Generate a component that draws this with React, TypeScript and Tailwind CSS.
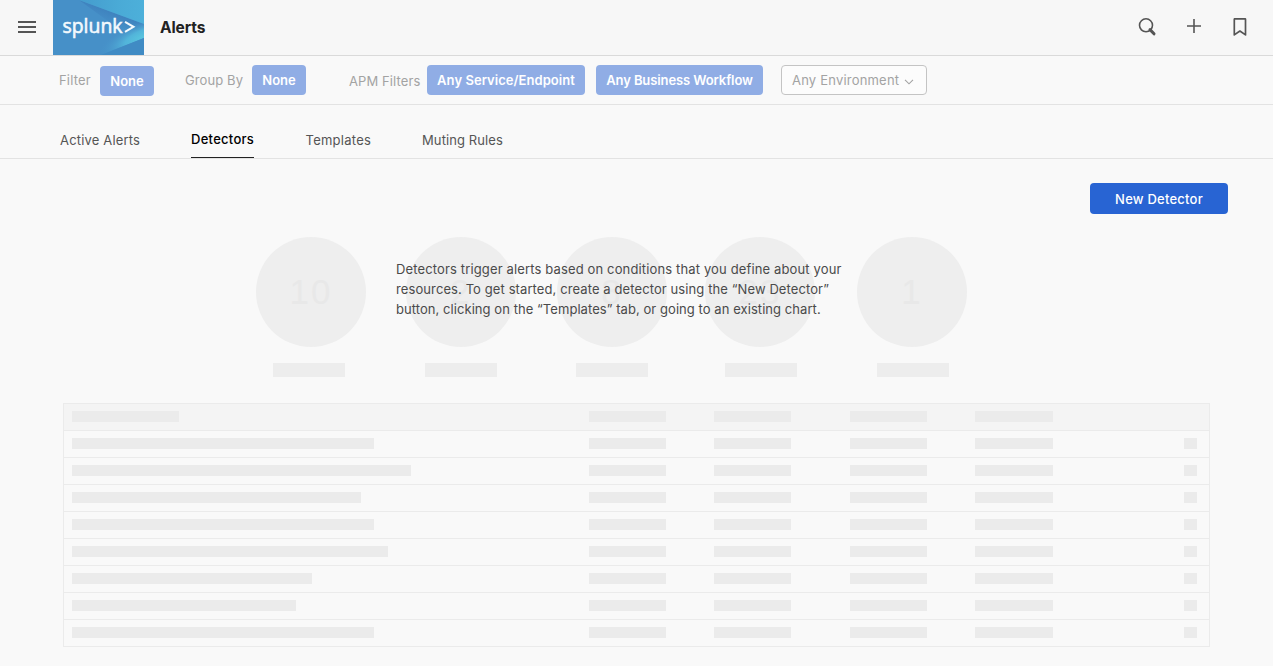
import React from "react";

const pill =
  "flex h-[30px] shrink-0 items-center justify-center rounded-[4px] bg-[#90ade5] text-[13px] font-semibold text-white whitespace-nowrap";

const circles = [
  { value: "10", place: "ml-0", bar: "left-[17px]" },
  { value: "2", place: "ml-[40px]", bar: "left-[19px]" },
  { value: "8", place: "ml-[41px]", bar: "left-[19px]" },
  { value: "23", place: "ml-[38px]", bar: "left-[20px]" },
  { value: "1", place: "ml-[42px]", bar: "left-[20px]" },
];

const rowWidths = [
  "w-[302px]",
  "w-[339px]",
  "w-[289px]",
  "w-[302px]",
  "w-[316px]",
  "w-[240px]",
  "w-[224px]",
  "w-[302px]",
];

function Bar({ className }: { className: string }) {
  return <div className={`h-[11px] bg-[#ebebeb] ${className}`} />;
}

function Row({ first, header = false }: { first: string; header?: boolean }) {
  return (
    <div
      className={`grid h-[27px] grid-cols-[517px_125px_136px_125px_209px_auto] border-b border-[#ebebeb] pt-[7px] pl-[8px] ${
        header ? "bg-[#f4f4f4]" : ""
      }`}
    >
      <Bar className={first} />
      <Bar className="w-[77px]" />
      <Bar className="w-[77px]" />
      <Bar className="w-[77px]" />
      <Bar className="w-[78px]" />
      {!header && <Bar className="w-[13px]" />}
    </div>
  );
}

function Logo() {
  return (
    <svg className="ml-[17px] h-[55px] w-[91px] shrink-0" viewBox="0 0 91 55">
      <defs>
        <linearGradient id="top" x1="0" y1="0" x2="1" y2="0">
          <stop offset="0" stopColor="#449bcd" />
          <stop offset="0.6" stopColor="#4aaad6" />
          <stop offset="1" stopColor="#4db0da" />
        </linearGradient>
        <radialGradient
          id="ray"
          gradientUnits="userSpaceOnUse"
          cx="0"
          cy="0"
          r="48"
          gradientTransform="translate(90 37) rotate(-22) scale(1 0.34)"
        >
          <stop offset="0" stopColor="#58c4de" />
          <stop offset="0.4" stopColor="#52b4da" />
          <stop offset="1" stopColor="#4690c8" stopOpacity="0" />
        </radialGradient>
        <linearGradient id="mid" gradientUnits="userSpaceOnUse" x1="50" y1="9" x2="45.5" y2="21">
          <stop offset="0" stopColor="#3f83bf" />
          <stop offset="1" stopColor="#4690c8" />
        </linearGradient>
      </defs>
      <rect width="91" height="55" fill="#4690c8" />
      <path d="M26 0 L91 24 V36 L70 32 Z" fill="url(#mid)" />
      <path d="M0 0 H26 L91 24 V38 L48 55 H0 Z" fill="url(#ray)" />
      <path d="M26 0 H91 V24 Z" fill="url(#top)" />
      <path d="M91 38 V55 H48 Z" fill="#408bc4" />
      <text
        x="9.5"
        y="32.5"
        fill="#f3f9fd"
        stroke="#f3f9fd"
        strokeWidth="0.6"
        fontFamily="'Open Sans', sans-serif"
        fontSize="19.5"
        fontWeight="400"
        textLength="60"
        lengthAdjust="spacingAndGlyphs"
      >
        splunk
      </text>
      <path d="M72 21.8 L80.5 26.8 L72 31.8" fill="none" stroke="#f3f9fd" strokeWidth="2" />
    </svg>
  );
}

export default function App() {
  return (
    <div className="h-[666px] w-[1273px] overflow-hidden bg-[#f9f9f9] font-['Inter',sans-serif] text-[13px] text-[#555]">
      <header className="flex h-[56px] items-start border-b border-[#dadada] bg-[#f7f7f7]">
        <svg className="mt-[20px] ml-[18px] h-[14px] w-[18px] shrink-0" viewBox="0 0 18 14">
          <path d="M0 2h18M0 7h18M0 12h18" stroke="#555" strokeWidth="2" />
        </svg>
        <Logo />
        <h1 className="mt-[16px] ml-[16px] text-[15.5px] leading-[24px] font-bold tracking-[-0.1px] text-[#222]">Alerts</h1>
        <svg className="mt-[17px] ml-auto h-[20px] w-[20px] shrink-0" viewBox="0 0 20 20">
          <circle cx="9" cy="8.3" r="6.5" fill="none" stroke="#555" strokeWidth="1.6" />
          <path d="M13 12.6 L17 16.8" stroke="#555" strokeWidth="3" strokeLinecap="round" />
        </svg>
        <svg className="mt-[19px] ml-[30px] h-[14px] w-[14px] shrink-0" viewBox="0 0 14 14">
          <path d="M7 0v14M0 7h14" stroke="#555" strokeWidth="1.6" />
        </svg>
        <svg className="mt-[18px] mr-[26px] ml-[32px] h-[19px] w-[14px] shrink-0" viewBox="0 0 14 19">
          <path
            d="M1.3 1.2 Q1.3 0.8 1.7 0.8 H12.1 Q12.5 0.8 12.5 1.2 V16.9 L6.9 13 L1.3 16.9 Z"
            fill="none"
            stroke="#555"
            strokeWidth="1.7"
            strokeLinejoin="round"
          />
        </svg>
      </header>

      <section className="flex h-[49px] items-start border-b border-[#e3e3e3] bg-[#f9f9f9] pt-[9px] pl-[59px] text-[#a3a3a3]">
        <span className="w-[41px] shrink-0 leading-[31px] tracking-[0.2px]">Filter</span>
        <button className={`${pill} mt-px w-[54px] pt-px`}>None</button>
        <span className="ml-[31px] w-[67px] shrink-0 leading-[31px] tracking-[0.1px] whitespace-nowrap">Group By</span>
        <button className={`${pill} w-[54px] pt-px`}>None</button>
        <span className="ml-[43px] w-[78px] shrink-0 leading-[33px] tracking-[0.1px] whitespace-nowrap">APM Filters</span>
        <button className={`${pill} w-[158px] pt-px tracking-[0.05px]`}>Any Service/Endpoint</button>
        <button className={`${pill} ml-[11px] w-[167px] pt-px tracking-[-0.1px]`}>Any Business Workflow</button>
        <button className="ml-[18px] flex h-[30px] w-[146px] items-center rounded-[4px] border border-[#c4c4c4] bg-[#fcfcfc] pt-px pl-[10px] whitespace-nowrap">
          <span className="w-[112px] text-left tracking-[0.2px]">Any Environment</span>
          <svg className="mt-[2px] h-[6px] w-[10px]" viewBox="0 0 10 6">
            <path d="M1 0.8 L5 4.8 L9 0.8" fill="none" stroke="#a3a3a3" strokeWidth="1.1" />
          </svg>
        </button>
      </section>

      <nav className="flex h-[54px] items-start border-b border-[#e3e3e3] pt-[25px] pl-[60px] leading-[21px] tracking-[0.17px]">
        <a className="w-[131px]">Active Alerts</a>
        <a className="h-[28px] w-[63px] border-b border-[#222] leading-[19px] font-medium tracking-[0.28px] text-black">Detectors</a>
        <a className="ml-[51.5px] w-[116.5px] tracking-[0.25px]">Templates</a>
        <a className="tracking-[0.1px]">Muting Rules</a>
      </nav>

      <main>
        <div className="flex justify-end pt-[24px] pr-[45px]">
          <button className="h-[31px] w-[138px] rounded-[4px] bg-[#2864d3] pt-[2px] font-medium tracking-[0.22px] text-white">
            New Detector
          </button>
        </div>

        <div className="relative mt-[23px] flex h-[140px] pl-[256px]">
          {circles.map((c) => (
            <div key={c.value} className={`relative w-[110px] shrink-0 ${c.place}`}>
              <div className="flex h-[110px] items-center justify-center rounded-full bg-[#eee] font-['Liberation_Sans',sans-serif] text-[35px] tracking-[2px] text-[#e8e8e8]">
                {c.value}
              </div>
              <div className={`relative mt-[16px] h-[14px] w-[72px] bg-[#ededed] ${c.bar}`} />
            </div>
          ))}
          <p className="absolute top-[22px] left-[396px] leading-[20px] whitespace-nowrap text-[#4a4a4a]">
            <span className="tracking-[0.14px]">Detectors trigger alerts based on conditions that you define about your</span>
            <br />
            <span className="tracking-[0.1px]">resources. To get started, create a detector using the “New Detector”</span>
            <br />
            <span className="tracking-[0.06px]">button, clicking on the “Templates” tab, or going to an existing chart.</span>
          </p>
        </div>

        <div className="mt-[26px] ml-[63px] w-[1147px] border border-b-0 border-[#ebebeb]">
          <Row first="w-[107px]" header />
          {rowWidths.map((w, i) => (
            <Row key={i} first={w} />
          ))}
        </div>
      </main>
    </div>
  );
}
